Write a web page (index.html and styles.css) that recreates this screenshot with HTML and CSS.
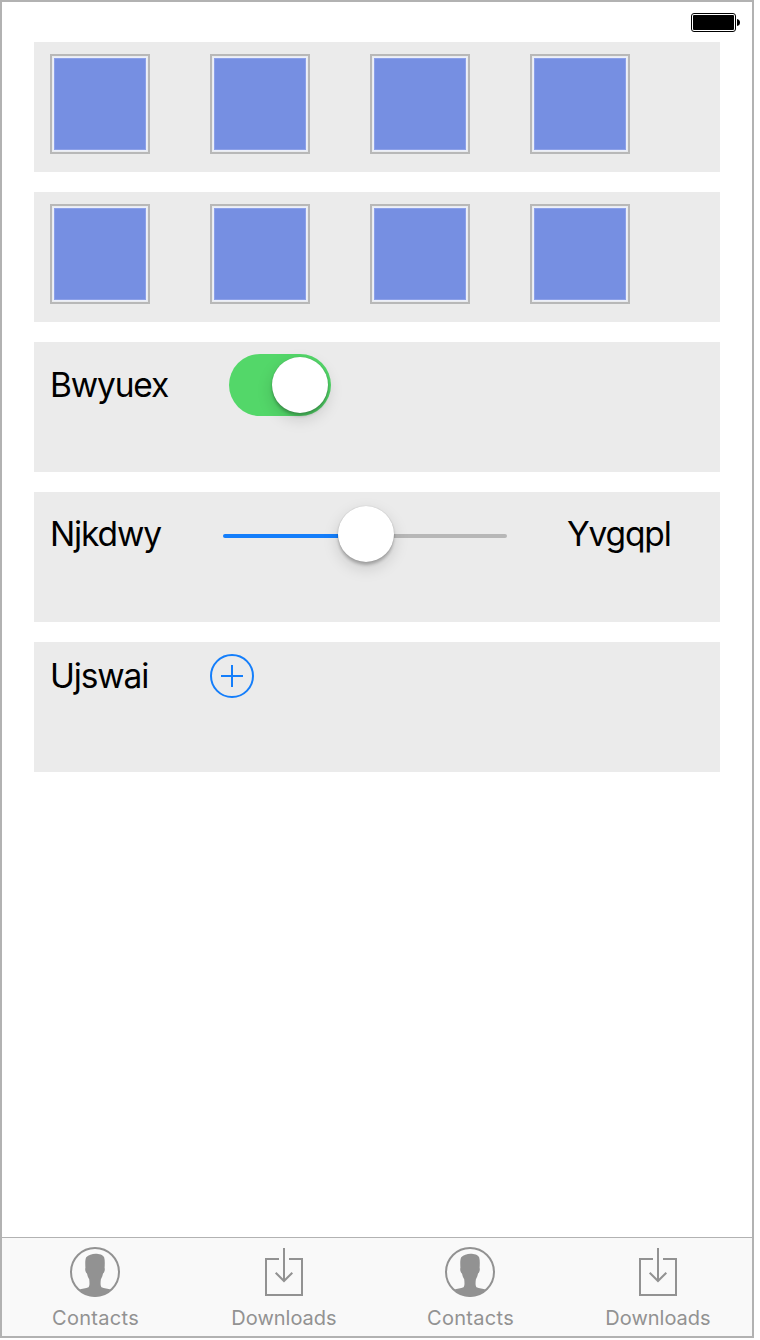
FILE: index.html
```html
<!DOCTYPE html>
<html lang="en">
<head>
<meta charset="utf-8">
<title>Controls</title>
<link rel="stylesheet" href="styles.css">
</head>
<body>
<svg class="defs" width="0" height="0" aria-hidden="true">
  <symbol id="contact" viewBox="0 0 50 50">
    <circle cx="25" cy="25" r="24" fill="none" stroke="currentColor" stroke-width="2"/>
    <path fill="currentColor" d="M9 42.800C12 41.300 16 41.800 18.500 40.300C19.900 38.500 19.500 35 19.200 32.200C17.900 30.500 17.500 28.500 17 26.500C15.500 25.500 14.800 22.500 15.400 20.800C15.200 17 15 12.500 16.200 10.300C18.500 8 22 6.800 25.500 6.800C29 6.800 33 7.800 34.200 10.500C35 13.500 34.800 17 34.600 20.800C35.200 22.500 34.500 25.500 33 26.500C32.600 28.500 32.100 30.500 30.900 32.200C30.500 35 30.200 38.500 31.500 40.300C34 41.800 38 41.300 41 42.800C36.500 47.200 31 49.500 25 49.500S13.500 47.200 9 42.800Z"/>
  </symbol>
  <symbol id="download" viewBox="0 0 50 50">
    <path fill="none" stroke="currentColor" stroke-width="2" d="M20 12H7V48H43V12H30M25 1V34M16.700 25.700L25 34L33.300 25.700"/>
  </symbol>
</svg>
<div class="screen">
  <header class="status">
    <svg width="50" height="20" viewBox="0 0 50 20">
      <rect x=".5" y=".5" width="44" height="18" rx="2.500" fill="#fff" stroke="#000"/>
      <rect x="2" y="2" width="41" height="15" rx="1" fill="#000"/>
      <path d="M46 6Q49 6.500 49 9.500T46 13Z" fill="#000"/>
    </svg>
  </header>
  <main class="content">
    <section class="card"><i class="tile"></i><i class="tile"></i><i class="tile"></i><i class="tile"></i></section>
    <section class="card"><i class="tile"></i><i class="tile"></i><i class="tile"></i><i class="tile"></i></section>
    <section class="card">
      <span class="label label-switch">Bwyuex</span>
      <div class="switch"><div class="knob"></div></div>
    </section>
    <section class="card">
      <span class="label label-min">Njkdwy</span>
      <div class="slider"><div class="track filled"></div><div class="knob"></div><div class="track rest"></div></div>
      <span class="label label-max">Yvgqpl</span>
    </section>
    <section class="card">
      <span class="label label-add">Ujswai</span>
      <svg class="add" width="44" height="44" viewBox="0 0 44 44" fill="none" stroke="#147efb" stroke-width="2">
        <circle cx="22" cy="22" r="21"/><path d="M11 22H33M22 11V33"/>
      </svg>
    </section>
  </main>
  <nav class="tabs">
    <div class="tab"><svg width="50" height="50"><use href="#contact"/></svg><span class="contacts">Contacts</span></div>
    <div class="tab"><svg width="50" height="50"><use href="#download"/></svg><span class="downloads">Downloads</span></div>
    <div class="tab"><svg width="50" height="50"><use href="#contact"/></svg><span class="contacts">Contacts</span></div>
    <div class="tab"><svg width="50" height="50"><use href="#download"/></svg><span class="downloads">Downloads</span></div>
  </nav>
</div>
</body>
</html>
```

FILE: styles.css
```css
* { box-sizing: border-box; }
body { margin: 0; background: #fff; font-family: Inter, "Liberation Sans", sans-serif; }
.defs { display: none; }
.screen {
  width: 754px; height: 1338px; border: 2px solid #b2b2b2; background: #fff;
  display: flex; flex-direction: column;
}
.status { height: 40px; padding: 11px 11px 0 0; display: flex; justify-content: flex-end; }
.content { flex: 1; padding: 0 32px; display: flex; flex-direction: column; gap: 20px; }
.card { height: 130px; background: #ebebeb; padding: 12px 16px; display: flex; align-items: flex-start; }
.tile {
  width: 100px; height: 100px; margin-right: 60px; border: 2px solid #b8b8b8;
  background: #768fe2; box-shadow: inset 0 0 0 1px #e9ebee, inset 0 0 0 2px #eceffa, inset 0 0 0 3px #8ca0e8;
}
.label { font-size: 33.5px; line-height: 42px; letter-spacing: -1.15px; white-space: nowrap; color: #000; }
.label-switch { width: 179px; padding-top: 10px; }
.label-min { width: 173px; padding-top: 9px; }
.label-max { padding-top: 9px; margin-left: 60px; }
.label-add { width: 160px; padding-top: 1px; }
.switch { width: 102px; height: 62px; border-radius: 31px; background: #53d769; padding: 3px; display: flex; justify-content: flex-end; }
.knob {
  width: 56px; height: 56px; flex: none; border-radius: 50%; background: #fff;
  box-shadow: 0 3px 3px rgba(0,0,0,.22), 0 6px 16px rgba(0,0,0,.15), 0 0 1px rgba(0,0,0,.25);
}
.slider { width: 284px; height: 60px; display: flex; align-items: center; }
.slider .knob { position: relative; z-index: 1; }
.track { height: 4px; margin-top: 4px; }
.filled { width: 115px; background: #147efb; border-radius: 2px 0 0 2px; }
.rest { flex: 1; background: #b7b7b7; border-radius: 0 2px 2px 0; }
.add { display: block; }
.tabs { height: 99px; border-top: 1px solid #b2b2b2; background: #f9f9f9; display: grid; grid-template-columns: 186px 192px 180px 194px; }
.tab { display: flex; flex-direction: column; align-items: center; padding-top: 9px; color: #929292; }
.tab:last-child { padding-left: 2px; }
.tab svg { display: block; }
.tab span { font-size: 20px; line-height: 24px; margin-top: 9px; letter-spacing: .3px; white-space: nowrap; }
.tab .contacts { padding-left: 1px; }
.tab .downloads { letter-spacing: 0; }
```
